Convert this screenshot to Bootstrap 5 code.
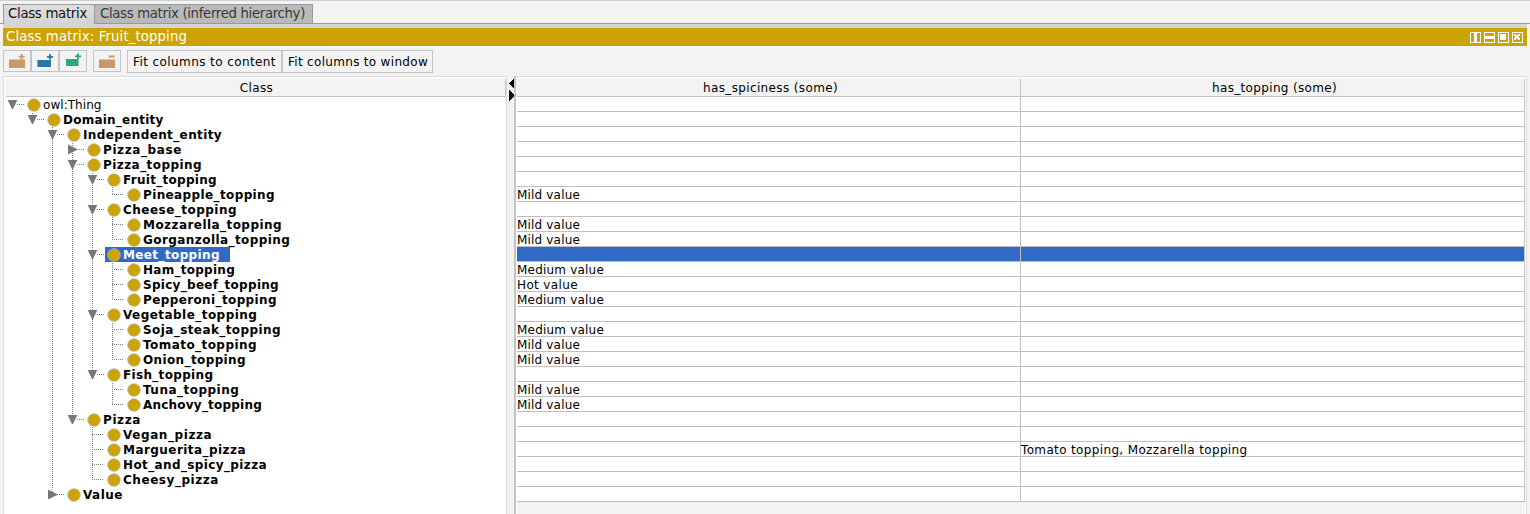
<!DOCTYPE html>
<html lang="en">
<head>
<meta charset="utf-8">
<title>Class matrix</title>
<link href="https://cdn.jsdelivr.net/npm/bootstrap@5.3.0/dist/css/bootstrap.min.css" rel="stylesheet">
<style>
html,body{height:514px;overflow:hidden}
body{background:#f3f3f3;font:12px/15px "DejaVu Sans",sans-serif;color:#000;border-top:1px solid #cfcfcf}
[data-w]{white-space:pre;display:inline-block}
.view-tabs{height:23px;padding:3px 0 0 3px;border-bottom:1px solid #999}
.view-tab{height:19px;border:1px solid #999;border-bottom:0;background:#bababa;color:#383838;font-size:13.3px;line-height:18px;padding-left:5px}
.view-tab.active{background:linear-gradient(#dedede,#d4d4d4);color:#111;width:91px;height:20px;padding-left:4px;border-right:0}
.view-tab.other{width:219px}
.view-title{height:22px;border-top:4px solid #d4d4d4;background:#cca300;color:#fff;font-size:13.3px;line-height:18px;margin:0 3px;padding:0 4px 0 3px}
.win-icons{gap:3px;padding-top:4px}
.tools{height:30px;padding:4px 0 0 3px}
.tool{background:#f3f3f3;border:1px solid #c4c4c4;border-radius:0;padding:0;height:22px;width:28px;line-height:0}
.tool.spaced{margin-left:6px}
.tool-text{height:23px;width:155px;font-size:12px;line-height:20px;color:#000;text-align:left;padding-left:5px}
.tool-text.second{width:151px}
.panes{height:438px;padding-left:3px}
.tree-pane{width:504px;border:solid #dcdcdc;border-width:1px 1px 0;background:#fff;padding:2px 0 0 2px}
.head-cell{height:18px;background:#f3f3f3;border-bottom:1px solid #c4c4c4;border-right:1px solid #c4c4c4;text-align:center;line-height:19px;padding-left:2px}
.head-cell.half{width:504px;padding-left:4px}
.splitter{width:7px;padding-top:2px}
.splitter svg{display:block}
.matrix-pane{width:1013px;border:1px solid #dcdcdc;border-left:2px solid #c4c4c4;border-bottom:0;padding:2px 1px 0 1px;background:#fff}
.matrix-fill{background:#f3f3f3}
.matrix-row{height:15px}
.matrix-cell{width:504px;border-right:1px solid #bfbfbf;border-bottom:1px solid #bfbfbf;line-height:16px;background:#fff;height:15px}
.matrix-row.selected .matrix-cell{background:#316ac5}
.tree-row{height:15px;font-weight:bold;line-height:16px}
.tree-row svg{flex:none;display:block;overflow:visible}
.tree-row.root{font-weight:normal}
.tree-row.selected .tree-label{background:#316ac5;color:#fff;width:107px;height:15px}
</style>
<script src="https://cdn.jsdelivr.net/npm/bootstrap@5.3.0/dist/js/bootstrap.bundle.min.js"></script>
</head>
<body>
<nav class="view-tabs d-flex">
  <div class="view-tab active"><span data-w="78.5">Class matrix</span></div>
  <div class="view-tab other"><span data-w="204.5">Class matrix (inferred hierarchy)</span></div>
</nav>
<header class="view-title d-flex justify-content-between">
  <span data-w="180.5">Class matrix: Fruit_topping</span>
  <div class="win-icons d-flex">
    <svg width="11" height="11" fill="none" stroke="#fff" shape-rendering="crispEdges"><path d="M.5.5h10v10H.5z"/><path fill="#fff" stroke="none" d="M4 1h3v9H4z"/></svg>
    <svg width="11" height="11" fill="none" stroke="#fff" shape-rendering="crispEdges"><path d="M.5.5h10v10H.5z"/><path fill="#fff" stroke="none" d="M1 4h9v3H1z"/></svg>
    <svg width="11" height="11" fill="none" stroke="#fff" shape-rendering="crispEdges"><path d="M.5.5h10v10H.5z"/><path fill="#fff" stroke="none" d="M2 2h6v6H2z"/></svg>
    <svg width="11" height="11" fill="none" stroke="#fff" shape-rendering="crispEdges"><path d="M.5.5h10v10H.5z"/><path fill="#fff" stroke="none" d="M2 2h2v1h2V2h2v2H7v2h1v2H6V7H4v1H2V6h1V4H2z"/></svg>
  </div>
</header>
<div class="tools d-flex align-items-start">
  <button class="btn tool"><svg width="26" height="20"><path fill="#c89a6a" d="M5 8.5h16V17H5zM14.7 4.8h2V3h2v1.8h2v1.8h-2v1.8h-2V6.600h-2z"/></svg></button>
  <button class="btn tool"><svg width="26" height="20"><path fill="#2a76a9" d="M5.400 9H19v7H5.400zM15 5h2V3.200h2V5h2v1.800h-2v1.800h-2V6.800h-2z"/></svg></button>
  <button class="btn tool"><svg width="26" height="20"><path fill="#2aaa7c" d="M6 8h12.500v7H6zM15 4.400h2V2.600h2v1.800h2v1.800h-2V8h-2V6.200h-2z"/></svg></button>
  <button class="btn tool spaced"><svg width="26" height="20"><path fill="#c89a6a" d="M5 8.500h16V17H5zM14.800 4.600h6v1.800h-6z"/></svg></button>
  <button class="btn tool tool-text spaced"><span data-w="142.500">Fit columns to content</span></button>
  <button class="btn tool tool-text second"><span data-w="139.500">Fit columns to window</span></button>
</div>
<main class="panes d-flex">
  <section class="tree-pane">
    <div class="head-cell"><span data-w="33">Class</span></div>
    <div id="tree"></div>
  </section>
  <div class="splitter"><svg width="7" height="24" shape-rendering="crispEdges"><path d="M7 0v11L2 6V5zM2 12v11l5-5v-1z"/></svg></div>
  <section class="matrix-pane d-flex flex-column">
    <div class="d-flex">
      <div class="head-cell half"><span data-w="134.5">has_spiciness (some)</span></div>
      <div class="head-cell half"><span data-w="124.5">has_topping (some)</span></div>
    </div>
    <div id="matrix"></div>
    <div class="matrix-fill flex-grow-1"></div>
  </section>
</main>
<script>
// [depth, label, label width, state (o open, c closed, - leaf), spiciness, width, topping, width]
const rows=[
[0,'owl:Thing',58,'o'],[1,'Domain_entity',100,'o'],[2,'Independent_entity',138.5,'o'],[3,'Pizza_base',78.5,'c'],
[3,'Pizza_topping',98.5,'o'],[4,'Fruit_topping',93.5,'o'],[5,'Pineapple_topping',131.5,'-','Mild value',62.5],
[4,'Cheese_topping',113.5,'o'],[5,'Mozzarella_topping',138.5,'-','Mild value',62.5],[5,'Gorganzolla_topping',146.8,'-','Mild value',62.5],
[4,'Meet_topping',96.5,'o'],[5,'Ham_topping',91.5,'-','Medium value',86.5],[5,'Spicy_beef_topping',135.5,'-','Hot value',60.5],
[5,'Pepperoni_topping',133.5,'-','Medium value',86.5],[4,'Vegetable_topping',133.8,'o'],[5,'Soja_steak_topping',137.5,'-','Medium value',86.5],
[5,'Tomato_topping',113.5,'-','Mild value',62.5],[5,'Onion_topping',102.5,'-','Mild value',62.5],[4,'Fish_topping',89.8,'o'],
[5,'Tuna_topping',95.8,'-','Mild value',62.5],[5,'Anchovy_topping',118.5,'-','Mild value',62.5],[3,'Pizza',37.5,'o'],
[4,'Vegan_pizza',88.8,'-'],[4,'Marguerita_pizza',122.5,'-',,,'Tomato topping, Mozzarella topping',226],
[4,'Hot_and_spicy_pizza',143.5,'-'],[4,'Cheesy_pizza',95.5,'-'],[2,'Value',39.5,'c']];
const dots=(x1,y1,x2,y2)=>`<path d="M${x1} ${y1}L${x2} ${y2}" stroke="#808080" stroke-dasharray="1 1" fill="none" shape-rendering="crispEdges"/>`;
let tree='',matrix='';
rows.forEach((r,i)=>{
  const [d,label,w,state,a='',aw=0,b='',bw=0]=r, x=6+20*d;
  let g='';
  // a guide continues while a later row still belongs to the same parent
  for(let k=1;k<=d;k++){
    const next=rows.slice(i+1).find(q=>q[0]<=k);
    const more=next&&next[0]===k, gx=6.5+20*k, off=i%2;
    if(k===d) g+=dots(gx,off,gx,more?15:8);
    else if(more) g+=dots(gx,off,gx,15);
  }
  g+=dots(state==='-'?x:x+5,7.5,x+12,7.5);
  if(state==='o') g+=`<path fill="#777" d="M${x-4.3} 3h9.6L${x+1} 12h-1z"/>`;
  if(state==='c') g+=`<path fill="#777" d="M${x-4} 2.5v10L${x+5} 8V7z"/>`;
  const sel=label==='Meet_topping';
  if(sel) g+=`<path fill="#316ac5" d="M${x+13} 0h20v15h-20z"/>`;
  g+=`<circle cx="${x+22}" cy="8" r="6.3" fill="#cca300" stroke="#b8b8b8" stroke-width=".8"/>`;
  tree+=`<div class="tree-row d-flex${d?'':' root'}${sel?' selected':''}"><svg width="${x+31}" height="15">${g}</svg><span class="tree-label"><span data-w="${w}">${label}</span></span></div>`;
  const cell=(t,n)=>`<div class="matrix-cell">${t?`<span data-w="${n}">${t}</span>`:''}</div>`;
  matrix+=`<div class="matrix-row d-flex${sel?' selected':''}">${cell(a,aw)}${cell(b,bw)}</div>`;
});
document.getElementById('tree').innerHTML=tree;
document.getElementById('matrix').innerHTML=matrix;
document.querySelectorAll('[data-w]').forEach(e=>{
  const n=e.textContent.length;
  e.style.letterSpacing=((+e.dataset.w+.5-e.getBoundingClientRect().width)/n).toFixed(3)+'px';
});
</script>
</body>
</html>
